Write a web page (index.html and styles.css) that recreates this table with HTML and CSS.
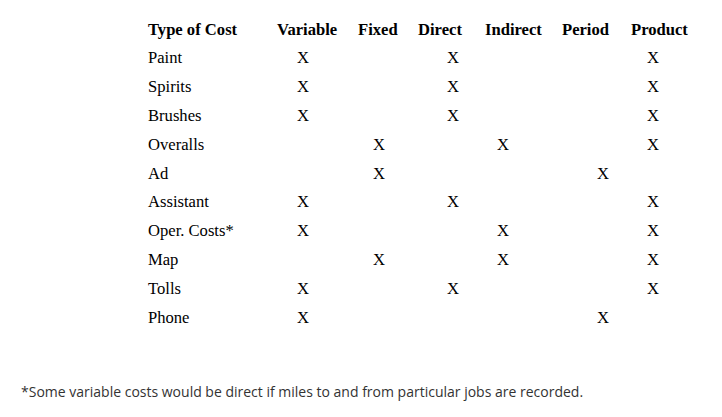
FILE: index.html
```
<!DOCTYPE html>
<html>
<head>
<meta charset="utf-8">
<link rel="stylesheet" href="styles.css">
</head>
<body>
<div class="sheet">
  <div class="cost-table">
    <div class="head">
      <span>Type of Cost</span>
      <span>Variable</span>
      <span>Fixed</span>
      <span>Direct</span>
      <span>Indirect</span>
      <span>Period</span>
      <span>Product</span>
    </div>
    <div class="row"><span class="label">Paint</span><span class="v">X</span><span class="d">X</span><span class="pr">X</span></div>
    <div class="row"><span class="label">Spirits</span><span class="v">X</span><span class="d">X</span><span class="pr">X</span></div>
    <div class="row"><span class="label">Brushes</span><span class="v">X</span><span class="d">X</span><span class="pr">X</span></div>
    <div class="row"><span class="label">Overalls</span><span class="f">X</span><span class="i">X</span><span class="pr">X</span></div>
    <div class="row"><span class="label">Ad</span><span class="f">X</span><span class="pe">X</span></div>
    <div class="row"><span class="label">Assistant</span><span class="v">X</span><span class="d">X</span><span class="pr">X</span></div>
    <div class="row"><span class="label">Oper. Costs*</span><span class="v">X</span><span class="i">X</span><span class="pr">X</span></div>
    <div class="row"><span class="label">Map</span><span class="f">X</span><span class="i">X</span><span class="pr">X</span></div>
    <div class="row"><span class="label">Tolls</span><span class="v">X</span><span class="d">X</span><span class="pr">X</span></div>
    <div class="row"><span class="label">Phone</span><span class="v">X</span><span class="pe">X</span></div>
  </div>
  <p class="footnote">*Some variable costs would be direct if miles to and from particular jobs are recorded.</p>
</div>
</body>
</html>
```

FILE: styles.css
```
html, body {
  margin: 0;
  padding: 0;
  background: #ffffff;
}

.sheet {
  width: 722px;
  height: 417px;
  overflow: hidden;
}

.cost-table {
  padding: 15px 0 0 148px;
  font-family: "Liberation Serif", "Times New Roman", serif;
  font-size: 16.6px;
  color: #000;
}

.head {
  display: grid;
  grid-template-columns: 129px 81px 60px 67px 77px 69px auto;
  height: 28px;
  line-height: 29px;
  font-weight: bold;
  white-space: nowrap;
}

.row {
  display: grid;
  grid-template-columns: 143px 24px 52px 24px 50px 24px 26px 24px 76px 24px 26px 24px;
  height: 28.9px;
  line-height: 29px;
  white-space: nowrap;
}

.row .label { grid-column: 1; }
.row .v, .row .f, .row .d, .row .i, .row .pe, .row .pr { text-align: center; }
.row .v { grid-column: 2; }
.row .f { grid-column: 4; }
.row .d { grid-column: 6; }
.row .i { grid-column: 8; }
.row .pe { grid-column: 10; }
.row .pr { grid-column: 12; }

.footnote {
  margin: 50px 0 0 0;
  padding-left: 21px;
  font-family: "Open Sans", sans-serif;
  font-size: 14px;
  line-height: 20px;
  color: #333333;
}
```
